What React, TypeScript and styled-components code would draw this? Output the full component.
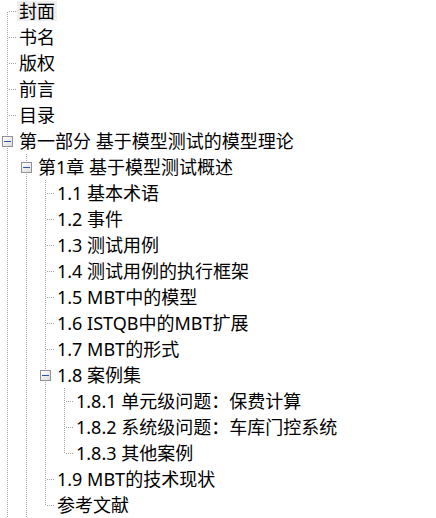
import React, { useId } from "react";
import styled, { createGlobalStyle } from "styled-components";

const GlobalStyle = createGlobalStyle`
  html, body { margin: 0; padding: 0; background: #ffffff; }
  body { width: 436px; height: 518px; overflow: hidden; }
`;

type TreeNode = { label: string; selected?: boolean; more?: boolean; children?: TreeNode[] };

const data: TreeNode[] = [
  { label: "封面", selected: true },
  { label: "书名" },
  { label: "版权" },
  { label: "前言" },
  { label: "目录" },
  {
    label: "第一部分 基于模型测试的模型理论",
    more: true,
    children: [
      {
        label: "第1章 基于模型测试概述",
        more: true,
        children: [
          { label: "1.1 基本术语" },
          { label: "1.2 事件" },
          { label: "1.3 测试用例" },
          { label: "1.4 测试用例的执行框架" },
          { label: "1.5 MBT中的模型" },
          { label: "1.6 ISTQB中的MBT扩展" },
          { label: "1.7 MBT的形式" },
          {
            label: "1.8 案例集",
            children: [
              { label: "1.8.1 单元级问题：保费计算" },
              { label: "1.8.2 系统级问题：车库门控系统" },
              { label: "1.8.3 其他案例" },
            ],
          },
          { label: "1.9 MBT的技术现状" },
          { label: "参考文献" },
        ],
      },
    ],
  },
];

const LINE = "#a0a0a0";

const Tree = styled.div`
  display: flex;
  flex-direction: column;
  margin-top: -2px;
`;

const Row = styled.div`
  display: flex;
  align-items: center;
  height: 26px;
  flex: none;
`;

const GuideSvg = styled.svg`
  display: block;
  flex: none;
`;

const Label = styled.span<{ $selected?: boolean }>`
  display: block;
  height: 20px;
  line-height: 20px;
  padding: 0 2px;
  white-space: nowrap;
  font-family: "Noto Sans", "Noto Sans CJK SC", sans-serif;
  font-size: 18px;
  color: #000000;
  background: ${(p) => (p.$selected ? "#efefef" : "transparent")};
`;

function Guide({ active }: { active: boolean }) {
  return (
    <GuideSvg width={19} height={26} viewBox="0 0 19 26" shapeRendering="crispEdges">
      {active && <line x1={7.5} y1={0} x2={7.5} y2={26} stroke={LINE} strokeDasharray="1 1" />}
    </GuideSvg>
  );
}

function Connector({ top, bottom, box }: { top: boolean; bottom: boolean; box: boolean }) {
  const id = useId().replace(/:/g, "");
  return (
    <GuideSvg width={17} height={26} viewBox="0 0 17 26" shapeRendering="crispEdges">
      <defs>
        <linearGradient id={`g${id}`} x1="0" y1="0" x2="1" y2="1">
          <stop offset="0" stopColor="#ffffff" />
          <stop offset="1" stopColor="#dcdcdc" />
        </linearGradient>
      </defs>
      {top && <line x1={7.5} y1={0} x2={7.5} y2={13} stroke={LINE} strokeDasharray="1 1" />}
      {bottom && <line x1={7.5} y1={14} x2={7.5} y2={26} stroke={LINE} strokeDasharray="1 1" />}
      {!box && <line x1={9} y1={13.5} x2={17} y2={13.5} stroke={LINE} strokeDasharray="1 1" />}
      {box && (
        <>
          <rect x={2.5} y={8.5} width={10} height={10} fill={`url(#g${id})`} stroke="#919191" />
          <line x1={4} y1={13.5} x2={11} y2={13.5} stroke="#2d56a8" />
        </>
      )}
    </GuideSvg>
  );
}

function renderNodes(nodes: TreeNode[], guides: boolean[]): React.ReactNode[] {
  const out: React.ReactNode[] = [];
  nodes.forEach((node, i) => {
    const hasNext = i < nodes.length - 1 || !!node.more;
    const firstRoot = guides.length === 0 && i === 0;
    out.push(
      <Row key={`${guides.length}-${node.label}`}>
        {guides.map((g, gi) => (
          <Guide key={gi} active={g} />
        ))}
        <Connector top={!firstRoot} bottom={hasNext} box={!!node.children} />
        <Label $selected={node.selected}>{node.label}</Label>
      </Row>
    );
    if (node.children) out.push(...renderNodes(node.children, [...guides, hasNext]));
  });
  return out;
}

export default function App() {
  return (
    <>
      <GlobalStyle />
      <Tree>{renderNodes(data, [])}</Tree>
    </>
  );
}
